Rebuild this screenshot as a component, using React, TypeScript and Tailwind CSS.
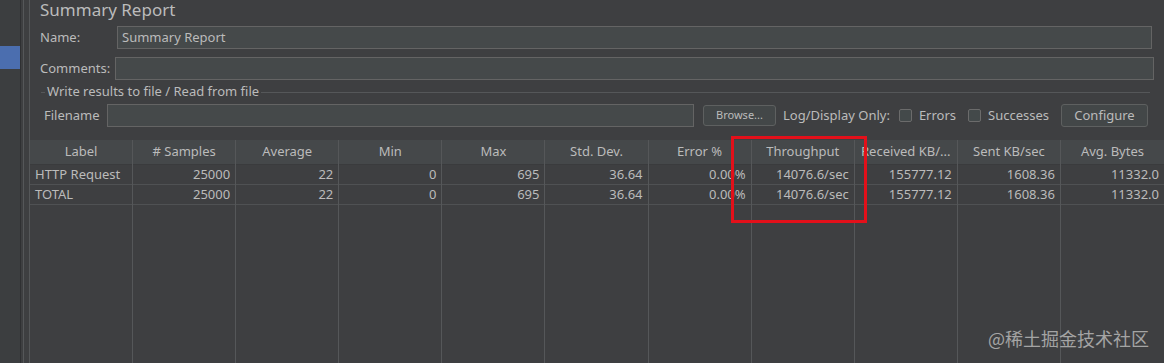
const columns = [
  'Label',
  '# Samples',
  'Average',
  'Min',
  'Max',
  'Std. Dev.',
  'Error %',
  'Throughput',
  'Received KB/...',
  'Sent KB/sec',
  'Avg. Bytes',
];

const rows = [
  ['HTTP Request', '25000', '22', '0', '695', '36.64', '0.00%', '14076.6/sec', '155777.12', '1608.36', '11332.0'],
  ['TOTAL', '25000', '22', '0', '695', '36.64', '0.00%', '14076.6/sec', '155777.12', '1608.36', '11332.0'],
];

const Checkbox = ({ label }: { label: string }) => (
  <label className="flex items-center gap-[7px] whitespace-nowrap">
    <span className="w-[13px] h-[13px] border border-[#6b6b6b] bg-[#43494a] rounded-[2px]" />
    <span>{label}</span>
  </label>
);

const App = () => {
  return (
    <div
      className="relative w-[1164px] h-[363px] overflow-hidden flex bg-[#3e3f41] text-[#bbbbbb] text-[13px]"
      style={{ fontFamily: '"Noto Sans", "DejaVu Sans", sans-serif' }}
    >
      {/* Tree sidebar */}
      <div className="w-[20px] shrink-0 bg-[#3c3e40]">
        <div className="mt-[46px] h-[23px] bg-[#4b6eaf]" />
      </div>
      <div className="w-[9px] shrink-0 border-l border-[#2f3032] flex">
        <div className="ml-[2px] w-px bg-[#555759]" />
        <div className="ml-[5px] w-px bg-[#555759]" />
      </div>

      {/* Main panel */}
      <div className="flex-1 flex flex-col min-w-0">
        <div className="h-[20px] pl-[11px] text-[17px] leading-[20px] whitespace-nowrap">Summary Report</div>

        <div className="mt-[6px] flex items-center h-[23px] pl-[11px] pr-[12px]">
          <span className="w-[77px]">Name:</span>
          <div className="flex-1 h-full border border-[#646464] bg-[#45494a] px-[4px] leading-[21px]">Summary Report</div>
        </div>

        <div className="mt-[8px] flex items-center h-[23px] pl-[11px] pr-[10px]">
          <span className="w-[75px] whitespace-nowrap">Comments:</span>
          <div className="flex-1 h-full border border-[#646464] bg-[#45494a]" />
        </div>

        {/* Write results to file */}
        <div className="mt-[4px] flex items-center h-[16px] pl-[12px] pr-[14px]">
          <div className="w-[4px] h-px bg-[#555759]" />
          <span className="px-[2px] whitespace-nowrap">Write results to file / Read from file</span>
          <div className="flex-1 h-px bg-[#555759]" />
        </div>

        <div className="mt-[4px] flex items-center h-[23px] pl-[15px] pr-[16px] whitespace-nowrap">
          <span className="w-[63px]">Filename</span>
          <div className="w-[587px] h-full border border-[#646464] bg-[#45494a]" />
          <button className="ml-[9px] w-[73px] h-[21px] border border-[#5e6060] rounded-[3px] bg-[#434748] text-[11px]">
            Browse...
          </button>
          <span className="ml-[7px]">Log/Display Only:</span>
          <div className="ml-[9px] flex items-center gap-[12px]">
            <Checkbox label="Errors" />
            <Checkbox label="Successes" />
          </div>
          <button className="ml-auto w-[87px] h-[23px] border border-[#5e6060] rounded-[3px] bg-[#434748]">
            Configure
          </button>
        </div>

        {/* Results table */}
        <div className="mt-[13px] ml-[1px] flex-1 grid grid-cols-11">
          {columns.map((col, ci) => (
            <div key={col} className="flex flex-col border-r border-[#555759] last:border-r-0">
              <div className="h-[25px] shrink-0 flex items-center justify-center bg-[#45484a] border-b border-[#3a3b3d] whitespace-nowrap overflow-hidden">
                {col}
              </div>
              {rows.map((row, ri) => (
                <div
                  key={ri}
                  className={`h-[20px] shrink-0 flex items-center border-b border-[#4f5153] px-[5px] whitespace-nowrap ${
                    ci === 0 ? 'justify-start' : 'justify-end'
                  }`}
                >
                  {row[ci]}
                </div>
              ))}
              <div className="flex-1" />
            </div>
          ))}
        </div>
      </div>

      {/* Highlight box */}
      <div className="absolute left-[731px] top-[136px] w-[136px] h-[87px] border-[3px] border-[#e3101a]" />

      {/* Watermark */}
      <div
        className="absolute left-[988px] top-[325px] text-[18px] text-[#a4a4a4] whitespace-nowrap"
        style={{ fontFamily: '"Noto Sans CJK SC", sans-serif' }}
      >
        @稀土掘金技术社区
      </div>
    </div>
  );
};

export default App;
